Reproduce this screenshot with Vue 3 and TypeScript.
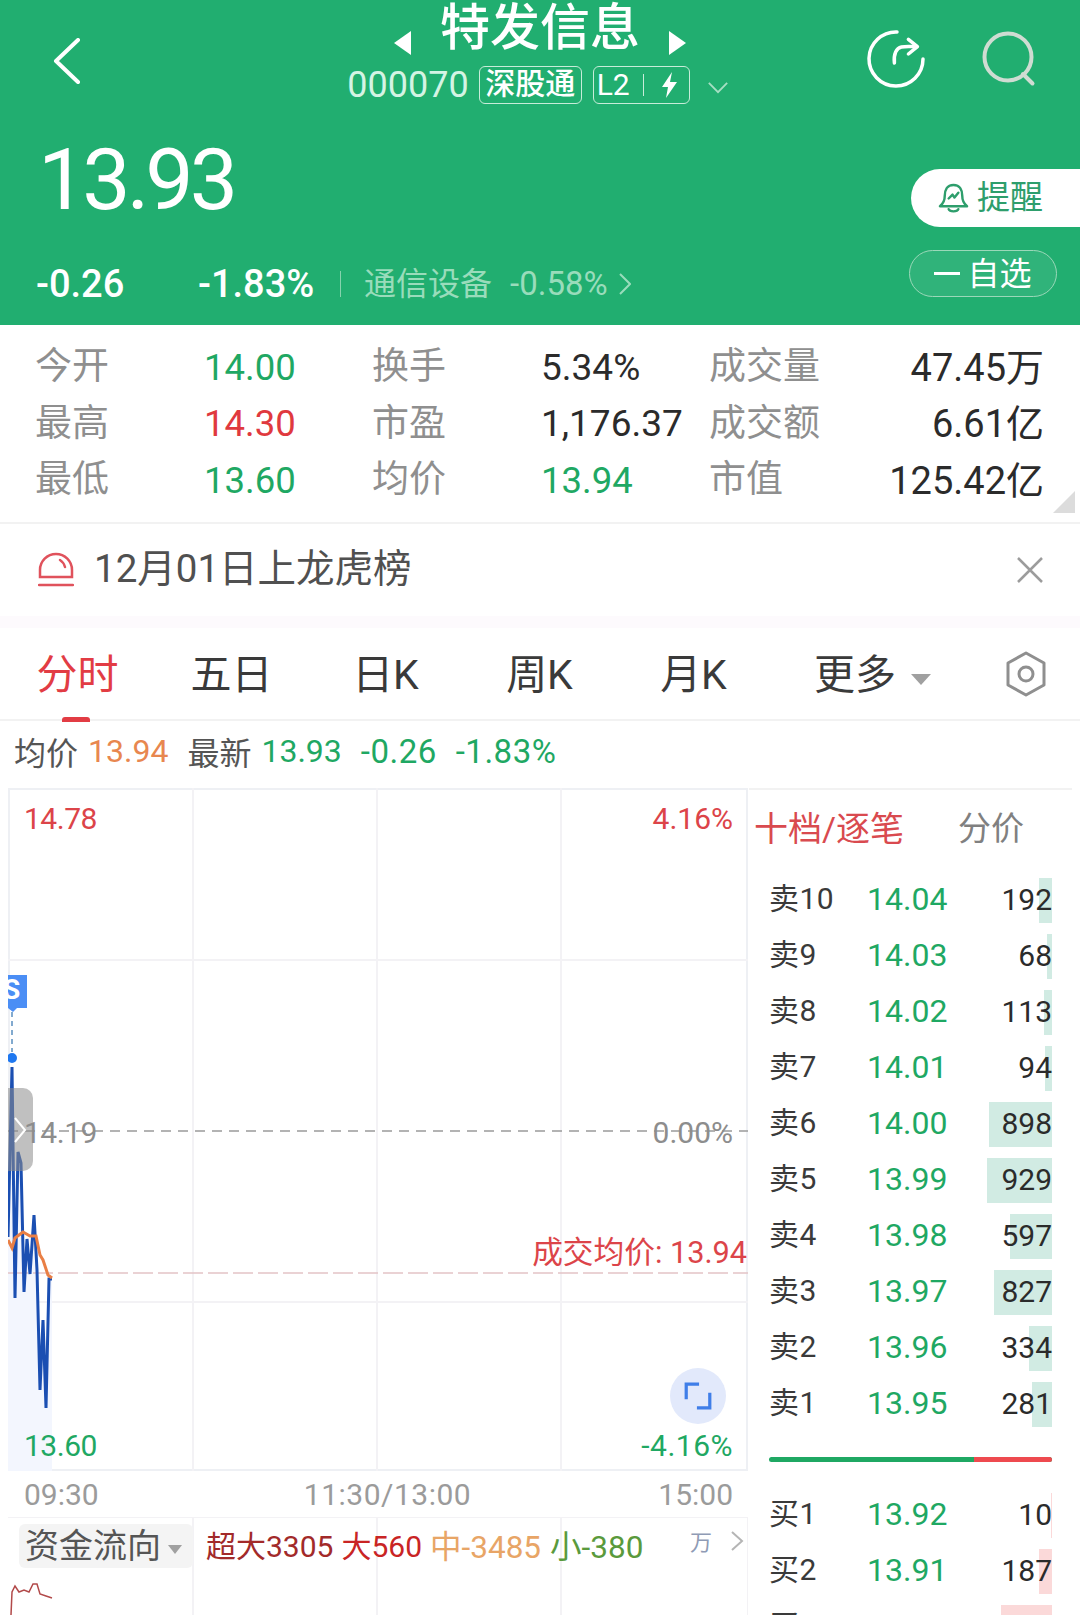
<template>
  <div class="page">
    <header class="hero">
      <div class="topbar">
        <svg class="back" viewBox="0 0 28 46"><path d="M25 2 3 23l22 21" /></svg>
        <div class="title-block">
          <div class="title-row">
            <span class="tri tri-left"></span>
            <span class="name">特发信息</span>
            <span class="tri tri-right"></span>
          </div>
          <div class="code-row">
            <span class="code">000070</span>
            <span class="tag">深股通</span>
            <span class="tag tag-l2">L2<i></i>
              <svg viewBox="0 0 17 26" width="17" height="26"><path d="M11 0 1 15h6l-2 11 11-16H9z" fill="#fff" /></svg>
            </span>
            <svg class="caret" viewBox="0 0 24 14"><path d="m2 2 10 10L22 2" /></svg>
          </div>
        </div>
        <div class="top-icons">
          <svg class="ic-refresh" viewBox="0 0 56 58">
            <path d="M29 2A27 27 0 1 0 55 29" />
            <path d="M26.400 33c-1-9 2-15 7-16s9-.5 15-.3" />
            <path d="m40.400 9.300 9 7.400-9 7.300" />
          </svg>
          <svg class="ic-search" viewBox="0 0 54 58">
            <circle cx="26" cy="27" r="23.500" />
            <path d="m41 44 9.500 9.500" />
          </svg>
        </div>
      </div>
      <div class="quote-row">
        <div class="price">13.93</div>
        <button class="remind">
          <svg viewBox="0 0 32 32" width="31" height="31">
            <path d="M16 2C9 2 7 8 7 13c0 5-1 8-5 11h28c-4-3-5-6-5-11 0-5-2-11-9-11Z" />
            <path d="M11 27c1 3 9 3 10 0" />
            <path d="m11 16 4-4 2 3 4-5" />
          </svg>
          <span>提醒</span>
        </button>
      </div>
      <div class="change-row">
        <span class="chg">-0.26</span>
        <span class="pct">-1.83%</span>
        <i class="sep"></i>
        <span class="sector">通信设备</span>
        <span class="sector-pct">-0.58%</span>
        <svg class="sector-arrow" viewBox="0 0 12 24"><path d="m1 2 10 10L1 22" /></svg>
        <button class="watch"><i></i><span>自选</span></button>
      </div>
    </header>

    <section class="stats">
      <template v-for="s in stats" :key="s.label">
        <span class="s-label">{{ s.label }}</span>
        <span class="s-value" :class="[s.tone, { right: s.right }]">{{ s.value }}</span>
      </template>
      <span class="corner"></span>
    </section>

    <section class="notice">
      <svg class="siren" viewBox="0 0 36 36" width="36" height="36">
        <path d="M2 25V18a16 16 0 0 1 32 0v7Z" />
        <path d="M22 8c2.500 1.500 4 3.500 5 7" />
        <path d="M1 33h34" />
      </svg>
      <span class="notice-text">12月01日上龙虎榜</span>
      <svg class="close" viewBox="0 0 28 28" width="28" height="28"><path d="m2 2 24 24M26 2 2 26" /></svg>
    </section>
    <div class="strip"></div>

    <nav class="tabs">
      <span v-for="(t, i) in tabs" :key="t" class="tab" :class="{ active: i === 0 }">{{ t }}</span>
      <span class="tab more">更多<i></i></span>
      <svg class="hex" viewBox="0 0 42 46" width="42" height="46">
        <path d="M21 2 39 12v22L21 44 3 34V12Z" />
        <circle cx="21" cy="23" r="7" />
      </svg>
    </nav>

    <div class="legend">
      <span class="l-k">均价</span><span class="orange">13.94</span>
      <span class="l-k l-gap">最新</span><span class="up">13.93</span>
      <span class="up l-chg">-0.26</span>
      <span class="up l-chg">-1.83%</span>
    </div>

    <div class="board">
      <div class="chart-col">
        <div class="chart">
          <svg class="chart-svg" viewBox="8 788 740 683">
            <path class="grid" d="M193 788V1471M377 788V1471M561 788V1471M8 960H748M8 1302H748" />
            <path class="area" :d="areaPath" />
            <path class="mid" d="M8 1131H748" />
            <path class="avg-line" d="M8 1273H748" />
            <path class="flag-line" d="M12 1012V1052" />
            <polyline class="price-line" :points="pricePoints" />
            <polyline class="avg-curve" :points="avgPoints" />
            <circle cx="12" cy="1058" r="5" fill="#1f78f0" />
            <path d="M8 975h19v33h-10l-4 4-5-4Z" fill="#4b8ef5" />
          </svg>
          <span class="flag-s">S</span>
          <span class="handle"><svg viewBox="0 0 14 28" width="14" height="28"><path d="m2 2 10 12L2 26" /></svg></span>
          <span class="mark tl soft-red">14.78</span>
          <span class="mark tr soft-red">4.16%</span>
          <span class="mark ml grey">14.19</span>
          <span class="mark mr grey">0.00%</span>
          <span class="mark deal soft-red">成交均价: 13.94</span>
          <span class="mark bl up">13.60</span>
          <span class="mark br up">-4.16%</span>
          <span class="expand">
            <svg viewBox="0 0 28 28" width="30" height="30"><path d="M15 3H3v14M13 25h12V11" /></svg>
          </span>
        </div>
        <div class="axis">
          <span>09:30</span><span class="axis-mid">11:30/13:00</span><span class="axis-end">15:00</span>
        </div>
        <div class="flow">
          <svg class="flow-svg" viewBox="8 1517 740 98">
            <path class="grid" d="M193 1517V1615M377 1517V1615M561 1517V1615M748 1517V1615M8 1517H748" />
            <polyline class="flow-line" points="11,1615 12,1592 15,1586 19,1592 24,1590 29,1592 33,1584 37,1584 40,1594 46,1596 52,1598" />
          </svg>
          <div class="flow-head">
            <span class="picker">资金流向<i></i></span>
            <span class="f-a">超大3305</span>
            <span class="f-b">大560</span>
            <span class="f-c">中-3485</span>
            <span class="f-d">小-380</span>
            <span class="f-unit">万</span>
            <svg class="f-arrow" viewBox="0 0 14 22" width="14" height="22"><path d="m2 2 10 9-10 9" /></svg>
          </div>
        </div>
      </div>

      <aside class="book">
        <div class="book-head">
          <span class="bh-on">十档/逐笔</span>
          <span class="bh-off">分价</span>
        </div>
        <div v-for="r in asks" :key="r.label" class="row">
          <span class="bar ask" :style="{ width: barWidth(r.vol) }"></span>
          <span class="r-label">{{ r.label }}</span>
          <span class="r-price">{{ r.price }}</span>
          <span class="r-vol">{{ r.vol }}</span>
        </div>
        <div class="ratio"><i></i></div>
        <div v-for="r in bids" :key="r.label" class="row">
          <span class="bar bid" :style="{ width: barWidth(r.vol) }"></span>
          <span class="r-label">{{ r.label }}</span>
          <span class="r-price">{{ r.price }}</span>
          <span class="r-vol">{{ r.vol }}</span>
        </div>
      </aside>
    </div>
  </div>
</template>

<script setup lang="ts">
interface Stat {
  label: string;
  value: string;
  tone?: string;
  right?: boolean;
}

interface BookRow {
  label: string;
  price: string;
  vol: number;
}

const stats: Stat[] = [
  { label: '今开', value: '14.00', tone: 'up' },
  { label: '换手', value: '5.34%' },
  { label: '成交量', value: '47.45万', right: true },
  { label: '最高', value: '14.30', tone: 'red' },
  { label: '市盈', value: '1,176.37' },
  { label: '成交额', value: '6.61亿', right: true },
  { label: '最低', value: '13.60', tone: 'up' },
  { label: '均价', value: '13.94', tone: 'up' },
  { label: '市值', value: '125.42亿', right: true }
];

const tabs = ['分时', '五日', '日K', '周K', '月K'];

const asks: BookRow[] = [
  { label: '卖10', price: '14.04', vol: 192 },
  { label: '卖9', price: '14.03', vol: 68 },
  { label: '卖8', price: '14.02', vol: 113 },
  { label: '卖7', price: '14.01', vol: 94 },
  { label: '卖6', price: '14.00', vol: 898 },
  { label: '卖5', price: '13.99', vol: 929 },
  { label: '卖4', price: '13.98', vol: 597 },
  { label: '卖3', price: '13.97', vol: 827 },
  { label: '卖2', price: '13.96', vol: 334 },
  { label: '卖1', price: '13.95', vol: 281 }
];

const bids: BookRow[] = [
  { label: '买1', price: '13.92', vol: 10 },
  { label: '买2', price: '13.91', vol: 187 },
  { label: '买3', price: '13.90', vol: 730 }
];

// 929 shares fills 65px in the order book
const barWidth = (vol: number) => `${vol * 0.07}px`;

const pricePoints =
  '8,1237 12,1067 15,1298 18,1152 21,1163 24,1292 27,1239 30,1274 34,1215 37,1270 40,1390 43,1320 46,1408 49,1279 52,1279';
const avgPoints =
  '8,1240 12,1248 15,1238 23,1232 30,1236 36,1236 40,1255 43,1260 48,1275 52,1278';
const areaPath = `M${pricePoints.split(' ').join(' L')} L52,1471 L8,1471 Z`;
</script>

<style>
html,
body {
  margin: 0;
  background: #fff;
}
</style>

<style scoped>
.page {
  width: 1080px;
  height: 1615px;
  overflow: hidden;
  background: #fff;
  font-family: Roboto, "Noto Sans CJK SC", sans-serif;
  color: #2b2b2b;
}

.up { color: #1fa863; }
.red { color: #e0393e; }
.soft-red { color: #dc4449; }
.grey { color: #8d8d8d; }
.orange { color: #e8874f; }

/* header */
.hero {
  height: 325px;
  background: #21ae70;
  color: #fff;
  display: flex;
  flex-direction: column;
  box-sizing: border-box;
}

.topbar {
  height: 132px;
  display: grid;
  grid-template-columns: 1fr auto 1fr;
  padding: 0 44px;
}

.back {
  width: 28px;
  height: 46px;
  margin: 38px 0 0 9px;
  fill: none;
  stroke: #fff;
  stroke-width: 4;
  stroke-linecap: round;
  stroke-linejoin: round;
}

.title-block {
  display: flex;
  flex-direction: column;
  align-items: center;
}

.title-row {
  display: flex;
  align-items: center;
  height: 56px;
}

.name {
  font-size: 50px;
  line-height: 56px;
  margin: 0 29px;
  font-weight: 500;
}

.tri {
  width: 0;
  height: 0;
  margin-top: 30px;
  border-top: 12px solid transparent;
  border-bottom: 12px solid transparent;
}

.tri-left { border-right: 17px solid #fff; }
.tri-right { border-left: 17px solid #fff; }

.code-row {
  display: flex;
  align-items: center;
  height: 40px;
  margin-top: 9px;
  margin-left: -4px;
}

.code {
  font-size: 36px;
  color: #d4f4e4;
  margin-right: 10px;
}

.tag {
  height: 38px;
  box-sizing: border-box;
  border: 1.500px solid #c8ecd9;
  border-radius: 6px;
  padding: 0 5.500px;
  font-size: 30px;
  line-height: 34px;
  margin-right: 11px;
  font-weight: 500;
}

.tag-l2 {
  display: flex;
  align-items: center;
  width: 97px;
  padding-left: 3px;
  font-weight: 400;
}

.tag-l2 i {
  width: 1px;
  height: 22px;
  background: #c8ecd9;
  margin: 0 17px 0 13px;
}

.caret {
  width: 22px;
  height: 13px;
  margin-left: 6px;
  margin-top: 4px;
  fill: none;
  stroke: #a6dfc3;
  stroke-width: 2;
}

.top-icons {
  display: flex;
  justify-content: flex-end;
  gap: 58px;
  padding-top: 30px;
}

.ic-refresh,
.ic-search {
  width: 56px;
  height: 58px;
  fill: none;
  stroke-linecap: round;
  stroke-linejoin: round;
  overflow: visible;
}

.ic-refresh { stroke: #fff; stroke-width: 3.500; }
.ic-search { stroke: #cfdcd2; stroke-width: 4; width: 54px; }

.quote-row {
  display: flex;
  justify-content: space-between;
  height: 96px;
}

.price {
  font-size: 86px;
  line-height: 86px;
  letter-spacing: -4px;
  margin-left: 38px;
  margin-top: 5px;
}

.remind {
  align-self: flex-end;
  width: 169px;
  height: 58px;
  margin-bottom: 1px;
  border: 0;
  border-radius: 29px 0 0 29px;
  background: #fff;
  color: #2e9e6c;
  font: inherit;
  font-size: 33px;
  display: flex;
  align-items: center;
  gap: 8px;
  padding: 0 0 0 27px;
}

.remind span { margin-bottom: 6px; }

.remind svg {
  fill: none;
  stroke: #2e9e6c;
  stroke-width: 2.500;
  stroke-linecap: round;
  stroke-linejoin: round;
}

.change-row {
  flex: 1;
  display: flex;
  align-items: center;
  padding: 14px 23px 0 36px;
  font-size: 38px;
  font-weight: 500;
}

.chg { width: 162px; }
.pct { width: 142px; }

.sep {
  width: 1px;
  height: 26px;
  background: #86d3ad;
  margin-right: 23px;
}

.sector,
.sector-pct {
  color: #99dcbb;
  font-size: 32px;
  font-weight: 400;
}

.sector { margin-bottom: 6px; }
.sector-pct { margin-left: 18px; font-size: 33px; }

.sector-arrow {
  width: 12px;
  height: 24px;
  margin-left: 11px;
  fill: none;
  stroke: #99dcbb;
  stroke-width: 2;
}

.watch {
  margin-left: auto;
  width: 148px;
  height: 47px;
  box-sizing: border-box;
  border: 1.500px solid #9bd8b9;
  border-radius: 24px;
  background: rgba(255, 255, 255, 0.07);
  color: #fff;
  font: inherit;
  font-size: 32px;
  font-weight: 400;
  display: flex;
  align-items: center;
  justify-content: center;
  gap: 7px;
  padding: 0;
  margin-top: -20px;
}

.watch span { margin-bottom: 6px; }

.watch i {
  width: 26px;
  height: 3px;
  background: #fff;
}

/* stats table */
.stats {
  position: relative;
  height: 199px;
  box-sizing: border-box;
  padding: 13px 36px 0 35px;
  display: grid;
  grid-template-columns: 169px 168px 169px 168px 168px 1fr;
  grid-auto-rows: 56.500px;
  align-items: center;
  font-size: 37px;
  border-bottom: 2px solid #f2f2f2;
}

.s-label { color: #8f8f8f; margin-bottom: 6px; }
.s-value { margin-top: 2px; white-space: nowrap; }
.s-value.up,
.s-value.red { font-size: 36.500px; }
.s-value.right { text-align: right; font-size: 38px; margin-top: -4px; }

.corner {
  position: absolute;
  right: 5px;
  bottom: 9px;
  width: 0;
  height: 0;
  border-left: 22px solid transparent;
  border-bottom: 22px solid #dcdcdc;
}

/* notice */
.notice {
  height: 92px;
  display: flex;
  align-items: center;
  padding: 0 36px 0 38px;
}

.siren {
  fill: none;
  stroke: #e0525c;
  stroke-width: 2.500;
  stroke-linecap: round;
  margin-right: 20px;
}

.notice-text {
  font-size: 38.500px;
  color: #505050;
  margin-bottom: 10px;
}

.close {
  margin-left: auto;
  fill: none;
  stroke: #9c9c9c;
  stroke-width: 2.500;
}

.strip {
  height: 12px;
  background: #fdfafd;
}

/* tabs */
.tabs {
  height: 93px;
  box-sizing: border-box;
  display: flex;
  align-items: center;
  border-bottom: 2px solid #f2f2f2;
}

.tab {
  position: relative;
  width: 155px;
  height: 93px;
  line-height: 96px;
  text-align: center;
  font-size: 41px;
  color: #3a3a3a;
  margin-right: -1px;
}

.tab.active { color: #e23c44; }

.tab.active::after {
  content: "";
  position: absolute;
  left: 62px;
  bottom: -2px;
  width: 28px;
  height: 5px;
  border-radius: 3px 3px 0 0;
  background: #e23c44;
}

.more {
  width: 154px;
  margin-left: 44px;
  text-align: left;
}

.more i {
  display: inline-block;
  width: 0;
  height: 0;
  margin-left: 15px;
  vertical-align: 4px;
  border-left: 10px solid transparent;
  border-right: 10px solid transparent;
  border-top: 11px solid #a0a0a0;
}

.hex {
  margin-left: auto;
  margin-right: 33px;
  fill: none;
  stroke: #8f8f8f;
  stroke-width: 3;
  stroke-linejoin: round;
}

/* legend above chart */
.legend {
  height: 67px;
  box-sizing: border-box;
  display: flex;
  align-items: center;
  padding: 0 0 7px 14px;
  font-size: 32px;
  gap: 10px;
}

.l-k { color: #555; }
.l-gap { margin-left: 9px; }
.l-chg { margin-left: 9px; letter-spacing: 0.500px; font-size: 33px; }

/* chart + order book */
.board {
  display: flex;
  height: 827px;
  overflow: hidden;
}

.chart-col {
  width: 741px;
  margin-left: 8px;
  flex: none;
}

.chart {
  position: relative;
  width: 740px;
  height: 683px;
  font-size: 30px;
  box-sizing: border-box;
  box-shadow: inset 0 0 0 2px #eef0f4;
}

.chart-svg,
.flow-svg {
  position: absolute;
  left: 0;
  top: 0;
  width: 740px;
  fill: none;
}

.chart-svg { height: 683px; }
.flow-svg { height: 98px; }

.grid {
  stroke: #f3f2f5;
  stroke-width: 2;
}

.area {
  fill: #f3f6fe;
  stroke: none;
}

.mid {
  stroke: #9a9a9a;
  stroke-width: 1.500;
  stroke-dasharray: 10 7;
}

.avg-line {
  stroke: #e3c3c6;
  stroke-width: 1.500;
  stroke-dasharray: 20 5;
}

.flag-line {
  stroke: #5a8fc0;
  stroke-width: 1.500;
  stroke-dasharray: 5 4;
}

.price-line {
  stroke: #1b4fb2;
  stroke-width: 3;
  fill: none;
}

.avg-curve {
  stroke: #e97f45;
  stroke-width: 3;
  fill: none;
}

.flag-s {
  position: absolute;
  left: 0;
  top: 186px;
  width: 19px;
  overflow: hidden;
  text-indent: -5px;
  font-size: 28px;
  font-weight: 700;
  line-height: 32px;
  color: #fff;
}

.handle {
  position: absolute;
  left: 0;
  top: 300px;
  width: 25px;
  height: 83px;
  border-radius: 0 10px 10px 0;
  background: rgba(140, 140, 140, 0.55);
  display: flex;
  align-items: center;
  padding-left: 5px;
  box-sizing: border-box;
}

.handle svg {
  fill: none;
  stroke: #fff;
  stroke-width: 2;
}

.mark {
  position: absolute;
  line-height: 36px;
}

.tl { left: 16px; top: 13px; letter-spacing: -0.500px; }
.tr { right: 15px; top: 13px; }
.ml { left: 16px; top: 327px; letter-spacing: -0.500px; }
.mr { right: 15px; top: 327px; }
.deal { right: 1px; top: 447px; font-size: 30.700px; }
.bl { left: 16px; top: 640px; letter-spacing: -0.500px; }
.br { right: 15px; top: 640px; letter-spacing: 0.500px; }

.expand {
  position: absolute;
  right: 22px;
  top: 580px;
  width: 56px;
  height: 56px;
  border-radius: 50%;
  background: #e2e9fb;
  display: flex;
  align-items: center;
  justify-content: center;
}

.expand svg {
  fill: none;
  stroke: #3f7ee8;
  stroke-width: 3;
}

.axis {
  height: 46px;
  width: 740px;
  box-sizing: border-box;
  display: grid;
  grid-template-columns: 1fr auto 1fr;
  align-items: center;
  padding: 0 15px 0 16px;
  font-size: 30px;
  color: #9b9b9b;
}

.axis-mid { letter-spacing: 0.500px; margin-left: 18px; }
.axis-end { text-align: right; }

.flow {
  position: relative;
  width: 740px;
  height: 98px;
}

.flow-head {
  position: relative;
  display: flex;
  align-items: center;
  height: 58px;
  padding-left: 11px;
  box-sizing: border-box;
}

.picker {
  width: 174px;
  height: 44px;
  margin-right: 13px;
  box-sizing: border-box;
  background: #f4f4f4;
  border-radius: 6px;
  font-size: 34px;
  line-height: 44px;
  color: #555;
  padding-left: 6px;
  white-space: nowrap;
}

.picker i {
  display: inline-block;
  width: 0;
  height: 0;
  margin-left: 7px;
  vertical-align: 4px;
  border-left: 7px solid transparent;
  border-right: 7px solid transparent;
  border-top: 9px solid #a0a0a0;
}

.f-a,
.f-b,
.f-c,
.f-d { margin-bottom: 4px; }

.f-a { color: #a22a2a; margin-right: 8px; font-size: 30px; }
.f-b { color: #c92424; margin-right: 8px; font-size: 30px; }
.f-c { color: #e8a566; margin-right: 9px; font-size: 31.500px; }
.f-d { color: #5a9a3c; font-size: 31.500px; }

.f-unit {
  margin-left: auto;
  font-size: 22px;
  color: #8f9bb5;
  margin-right: 18px;
  margin-bottom: 12px;
}

.f-arrow {
  margin-right: 4px;
  margin-bottom: 10px;
  fill: none;
  stroke: #b5b5b5;
  stroke-width: 2;
}

.flow-line {
  stroke: #b24a4a;
  stroke-width: 1.500;
}

.book {
  position: relative;
  width: 331px;
  box-sizing: border-box;
  padding-right: 28px;
}

.book::before {
  content: "";
  position: absolute;
  left: 0;
  top: 0;
  width: 323px;
  height: 2px;
  background: #f2f2f2;
}

.book-head {
  height: 90px;
  box-sizing: border-box;
  display: flex;
  align-items: center;
  padding: 0 0 14px 5px;
}

.bh-on {
  font-size: 34px;
  color: #d94a4f;
  width: 204px;
}

.bh-off {
  font-size: 33px;
  color: #808080;
}

.row {
  position: relative;
  height: 45px;
  margin-bottom: 11px;
  display: flex;
  align-items: center;
}

.bar {
  position: absolute;
  right: 0;
  top: 0;
  bottom: 0;
}

.bar.ask { background: #d1ebe3; }
.bar.bid { background: #fbd9d9; }

.r-label {
  position: relative;
  width: 98px;
  padding-left: 20px;
  font-size: 30px;
  letter-spacing: 0.500px;
  color: #3a3a3a;
  margin-bottom: 9px;
}

.r-price {
  position: relative;
  color: #1fa863;
  font-size: 32px;
  margin-bottom: 3px;
}

.r-vol {
  position: relative;
  margin-left: auto;
  font-size: 30px;
  margin-bottom: 3px;
}

.ratio {
  height: 5px;
  margin: 30px 0 31px 20px;
  border-radius: 3px;
  background: #1fa863;
  overflow: hidden;
  display: flex;
  justify-content: flex-end;
}

.ratio i {
  width: 78px;
  background: #ee4a4f;
}
</style>
